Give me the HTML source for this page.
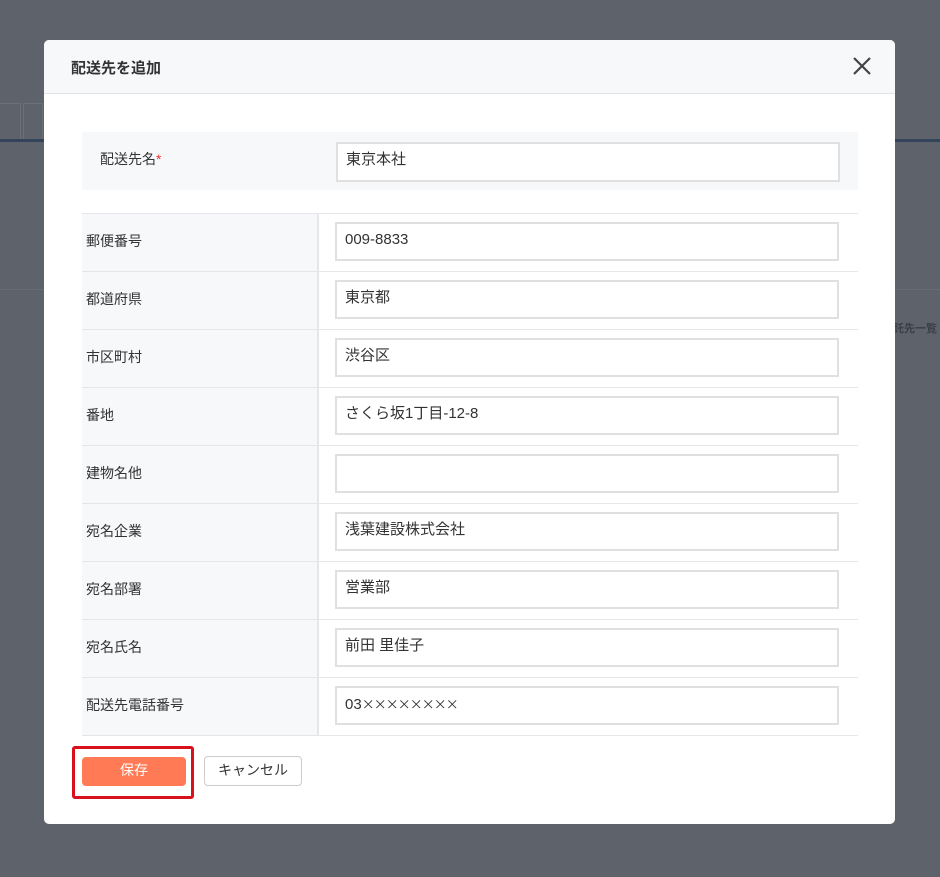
<!DOCTYPE html>
<html><head><meta charset="utf-8"><style>
*{box-sizing:border-box;margin:0;padding:0}
body{width:940px;height:877px;background:#5d626b;position:relative;overflow:hidden;font-family:"Liberation Sans","Noto Sans CJK JP",sans-serif;color:#333}
.bgline{position:absolute;left:0;width:940px;top:139px;height:3px;background:#33445a}
.tab{position:absolute;top:103px;height:37px;border:1px solid #6a6f78;border-bottom:none}
.modal{position:absolute;left:44px;top:40px;width:851px;height:784px;background:#fff;border-radius:5px;overflow:hidden}
.hd{height:54px;background:#f7f8fa;border-bottom:1px solid #e2e4e8;position:relative}
.hd h1{position:absolute;left:27px;top:17px;font-size:15px;font-weight:bold;color:#333}
.x{position:absolute;right:22px;top:15px;width:22px;height:22px}
.first{position:absolute;left:38px;top:92px;width:776px;height:58px;background:#f7f8fa}
.first .lb{position:absolute;left:18px;top:17px;font-size:14px}
.first .lb span{color:#e33}
.inp{position:absolute;width:504px;height:40px;border:2px solid #e0e0e0;background:#fff;font-size:15px;line-height:22px;padding:5px 0 0 8px}
.first .inp{left:254px;top:10px}
table{position:absolute;left:38px;top:173px;width:776px;border-collapse:collapse}
td{height:58px;border-top:1px solid #e4e6ea;border-bottom:1px solid #e4e6ea;position:relative;font-size:14px;padding-bottom:3px}
td.l{width:236px;background:#f7f8fa;border-right:2px solid #e6e7ea;padding-left:4px}
td.v .inp{left:16px;top:8px;height:39px}
.red{position:absolute;left:28px;top:706px;width:122px;height:53px;border:3px solid #d9101e;border-radius:3px}
.save{position:absolute;left:38px;top:717px;width:104px;height:29px;background:#ff7a55;border-radius:4px;color:#fff;font-size:14px;text-align:center;line-height:26px}
.cancel{position:absolute;left:160px;top:716px;width:98px;height:30px;border:1px solid #ccc;border-radius:4px;font-size:14px;text-align:center;line-height:26px;color:#333}
</style></head><body>
<div class="tab" style="left:-5px;width:26px"></div>
<div class="tab" style="left:23px;width:20px"></div>
<div class="bgline"></div>
<div style="position:absolute;left:0;top:289px;width:940px;height:1px;background:#676c75"></div>
<div style="position:absolute;left:893px;top:320px;font-size:11px;font-weight:bold;color:#3a3f47">託先一覧</div>
<div class="modal">
<div class="hd"><h1>配送先を追加</h1>
<svg class="x" viewBox="0 0 22 22"><path d="M3 3L19 19M19 3L3 19" stroke="#444" stroke-width="2.2"/></svg></div>
<div class="first"><div class="lb">配送先名<span>*</span></div><div class="inp">東京本社</div></div>
<table>
<tr><td class="l">郵便番号</td><td class="v"><div class="inp">009-8833</div></td></tr>
<tr><td class="l">都道府県</td><td class="v"><div class="inp">東京都</div></td></tr>
<tr><td class="l">市区町村</td><td class="v"><div class="inp">渋谷区</div></td></tr>
<tr><td class="l">番地</td><td class="v"><div class="inp">さくら坂1丁目-12-8</div></td></tr>
<tr><td class="l">建物名他</td><td class="v"><div class="inp"></div></td></tr>
<tr><td class="l">宛名企業</td><td class="v"><div class="inp">浅葉建設株式会社</div></td></tr>
<tr><td class="l">宛名部署</td><td class="v"><div class="inp">営業部</div></td></tr>
<tr><td class="l">宛名氏名</td><td class="v"><div class="inp">前田 里佳子</div></td></tr>
<tr><td class="l">配送先電話番号</td><td class="v"><div class="inp">03<span style="font-family:'Noto Sans CJK JP',sans-serif;font-size:13px;letter-spacing:-1px">××××××××</span></div></td></tr>
</table>
<div class="red"></div>
<div class="save">保存</div>
<div class="cancel">キャンセル</div>
</div>
</body></html>
